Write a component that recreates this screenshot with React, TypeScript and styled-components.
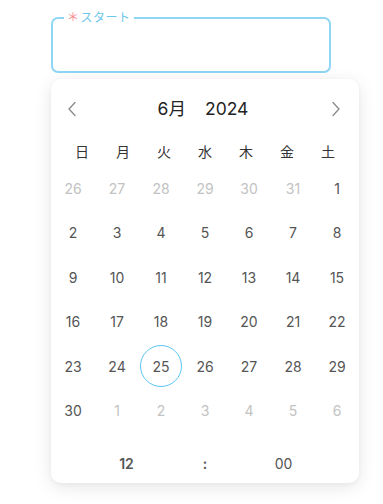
import React from "react";
import styled, { createGlobalStyle } from "styled-components";

const GlobalStyle = createGlobalStyle`
	html, body {
		margin: 0;
		padding: 0;
		background: #fff;
		font-family: Inter, "Noto Sans CJK JP", sans-serif;
	}
`;

const weekdays = ["日", "月", "火", "水", "木", "金", "土"];

type Day = { n: number; muted?: boolean; selected?: boolean };

const buildDays = (): Day[] => {
	const days: Day[] = [];
	for (let i = 26; i <= 31; i++) days.push({ n: i, muted: true });
	for (let i = 1; i <= 30; i++) days.push({ n: i, selected: i === 25 });
	for (let i = 1; i <= 6; i++) days.push({ n: i, muted: true });
	return days;
};

const Chevron = ({ dir }: { dir: "left" | "right" }) => (
	<svg width="10" height="16" viewBox="0 0 10 16" fill="none">
		<path
			d={dir === "left" ? "M8 1.5 L2 8 L8 14.5" : "M2 1.5 L8 8 L2 14.5"}
			stroke="#8a8a8a"
			strokeWidth="1.3"
			strokeLinecap="round"
			strokeLinejoin="round"
		/>
	</svg>
);

const App = () => {
	const days = buildDays();
	return (
		<Page>
			<GlobalStyle />
			<Field>
				<Legend>
					<Star>＊</Star>スタート
				</Legend>
			</Field>
			<Popup>
				<Header>
					<NavButton>
						<Chevron dir="left" />
					</NavButton>
					<Title>
						<span>6月</span>
						<span>2024</span>
					</Title>
					<NavButton>
						<Chevron dir="right" />
					</NavButton>
				</Header>
				<WeekRow>
					{weekdays.map((w) => (
						<WeekCell key={w}>{w}</WeekCell>
					))}
				</WeekRow>
				<DayGrid>
					{days.map((d, i) => (
						<DayCell key={i} $muted={d.muted}>
							<DayInner $selected={d.selected}>{d.n}</DayInner>
						</DayCell>
					))}
				</DayGrid>
				<TimeRow>
					<TimeCell $bold>12</TimeCell>
					<TimeCell $bold>:</TimeCell>
					<TimeCell>00</TimeCell>
				</TimeRow>
			</Popup>
		</Page>
	);
};

export default App;

const Page = styled.div`
	position: relative;
	width: 383px;
	height: 504px;
	overflow: hidden;
	padding: 11px 0 0 51px;
	box-sizing: border-box;
`;

const Field = styled.fieldset`
	margin: 0;
	width: 280px;
	height: 62px;
	box-sizing: border-box;
	border: 2px solid #8fd6f5;
	border-radius: 7px;
	padding: 0 11px;
`;

const Legend = styled.legend`
	padding: 0 3px;
	margin-left: 0;
	font-size: 12px;
	line-height: 14px;
	color: #6fc6ec;
	letter-spacing: 0.5px;
`;

const Star = styled.span`
	color: #f7868c;
	font-size: 12px;
	margin-right: 1px;
`;

const Popup = styled.div`
	position: absolute;
	top: 79px;
	left: 51px;
	width: 308px;
	height: 404px;
	background: #fff;
	border-radius: 10px;
	box-shadow: 0 4px 18px rgba(0, 0, 0, 0.1), 0 1px 4px rgba(0, 0, 0, 0.04);
	display: flex;
	flex-direction: column;
`;

const Header = styled.div`
	height: 60px;
	display: flex;
	align-items: center;
	justify-content: space-between;
	padding: 0 18px 0 16px;
`;

const NavButton = styled.div`
	width: 10px;
	height: 16px;
	display: flex;
	align-items: center;
`;

const Title = styled.div`
	display: flex;
	align-items: baseline;
	gap: 19px;
	font-size: 17.5px;
	line-height: 20px;
	color: #222;
	margin-right: 2px;
`;

const WeekRow = styled.div`
	display: grid;
	grid-template-columns: repeat(7, 41px);
	justify-content: center;
	height: 24px;
	align-items: center;
	margin-bottom: 3px;
`;

const WeekCell = styled.div`
	text-align: center;
	font-size: 14px;
	color: #333;
`;

const DayGrid = styled.div`
	display: grid;
	grid-template-columns: repeat(7, 44px);
	grid-auto-rows: 44.5px;
`;

const DayCell = styled.div<{ $muted?: boolean }>`
	display: flex;
	align-items: center;
	justify-content: center;
	font-size: 14px;
	color: ${(p) => (p.$muted ? "#c2c2c2" : "#555")};
`;

const DayInner = styled.div<{ $selected?: boolean }>`
	width: 42px;
	height: 42px;
	box-sizing: border-box;
	border-radius: 50%;
	display: flex;
	align-items: center;
	justify-content: center;
	border: 1px solid ${(p) => (p.$selected ? "#5ec6f2" : "transparent")};
`;

const TimeRow = styled.div`
	margin-top: 10px;
	height: 40px;
	display: grid;
	grid-template-columns: repeat(3, 78.5px);
	justify-content: center;
	align-items: center;
`;

const TimeCell = styled.div<{ $bold?: boolean }>`
	text-align: center;
	font-size: 14px;
	color: #555;
	font-weight: ${(p) => (p.$bold ? 600 : 400)};
`;
